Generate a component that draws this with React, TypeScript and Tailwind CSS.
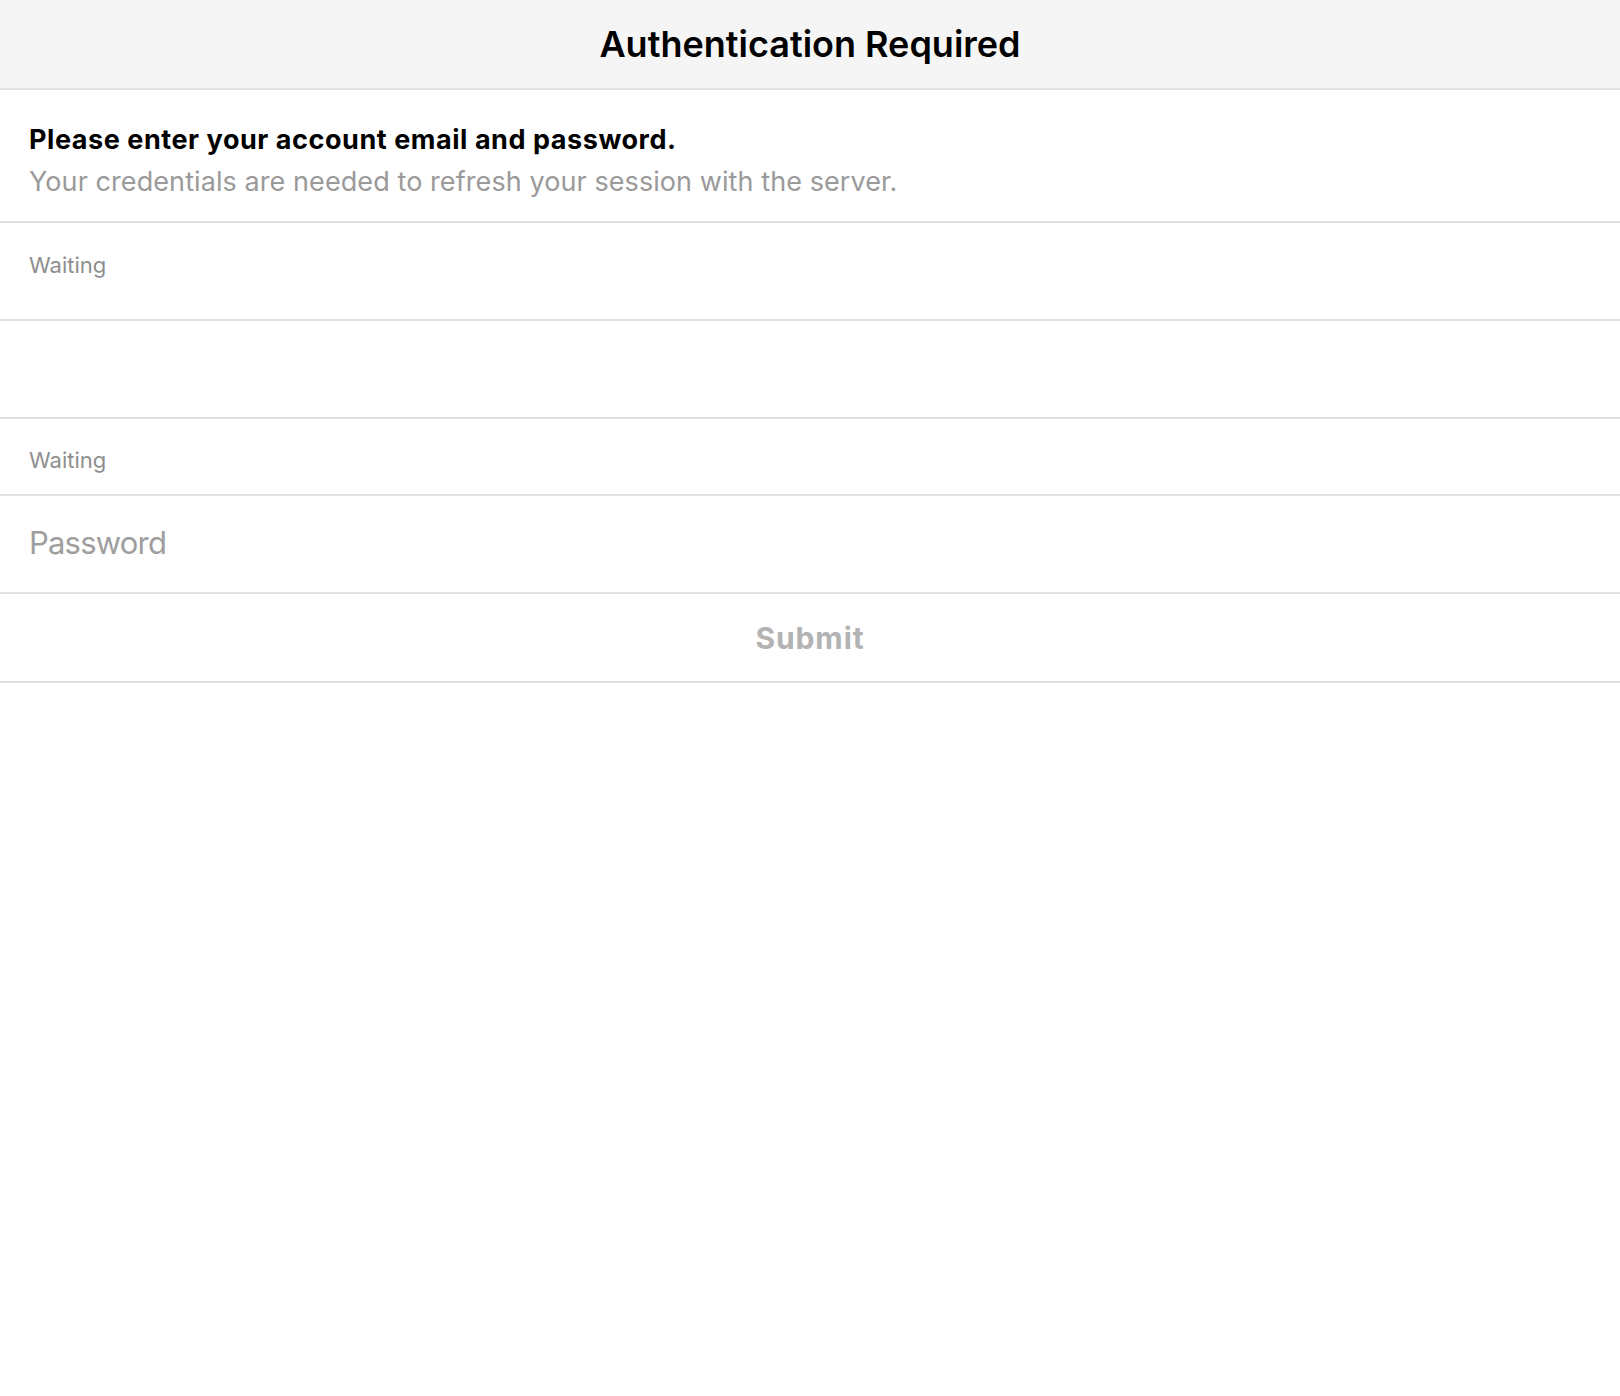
import React from "react";

export default function App() {
  return (
    <div
      className="min-h-[1396px] w-full bg-white text-black"
      style={{ fontFamily: "Inter, 'Noto Sans', 'Liberation Sans', sans-serif" }}
    >
      <header className="flex h-[90px] items-center justify-center border-b-2 border-[#e0e0e0] bg-[#f5f5f5]">
        <h1 className="text-[36px] font-semibold leading-[36px]">
          Authentication Required
        </h1>
      </header>

      <section className="h-[133px] border-b-2 border-[#e0e0e0] px-[29px] pt-[32px]">
        <p className="text-[27px] font-bold leading-[36px] tracking-[0.55px]">
          Please enter your account email and password.
        </p>
        <p className="mt-[6px] text-[27px] leading-[36px] tracking-[0.08px] text-[#9a9a9a]">
          Your credentials are needed to refresh your session with the server.
        </p>
      </section>

      <div className="h-[98px] border-b-2 border-[#e0e0e0] px-[29px] pt-[28px]">
        <span className="block text-[22px] leading-[28px] text-[#8e8e8e]">Waiting</span>
      </div>

      <div className="h-[98px] border-b-2 border-[#e0e0e0] px-[29px]" />

      <div className="h-[77px] border-b-2 border-[#e0e0e0] px-[29px] pt-[27px]">
        <span className="block text-[22px] leading-[28px] text-[#8e8e8e]">Waiting</span>
      </div>

      <div className="h-[98px] border-b-2 border-[#e0e0e0] px-[29px] pt-[27px]">
        <input
          type="password"
          placeholder="Password"
          className="block h-[40px] w-full bg-transparent text-[31px] leading-[40px] tracking-[-0.8px] outline-none placeholder:text-[#9e9e9e]"
        />
      </div>

      <div className="h-[89px] border-b-2 border-[#e0e0e0] pt-[26px] text-center">
        <button
          type="button"
          disabled
          className="text-[30px] font-bold leading-[36px] tracking-[0.9px] text-[#b3b3b3]"
        >
          Submit
        </button>
      </div>
    </div>
  );
}
